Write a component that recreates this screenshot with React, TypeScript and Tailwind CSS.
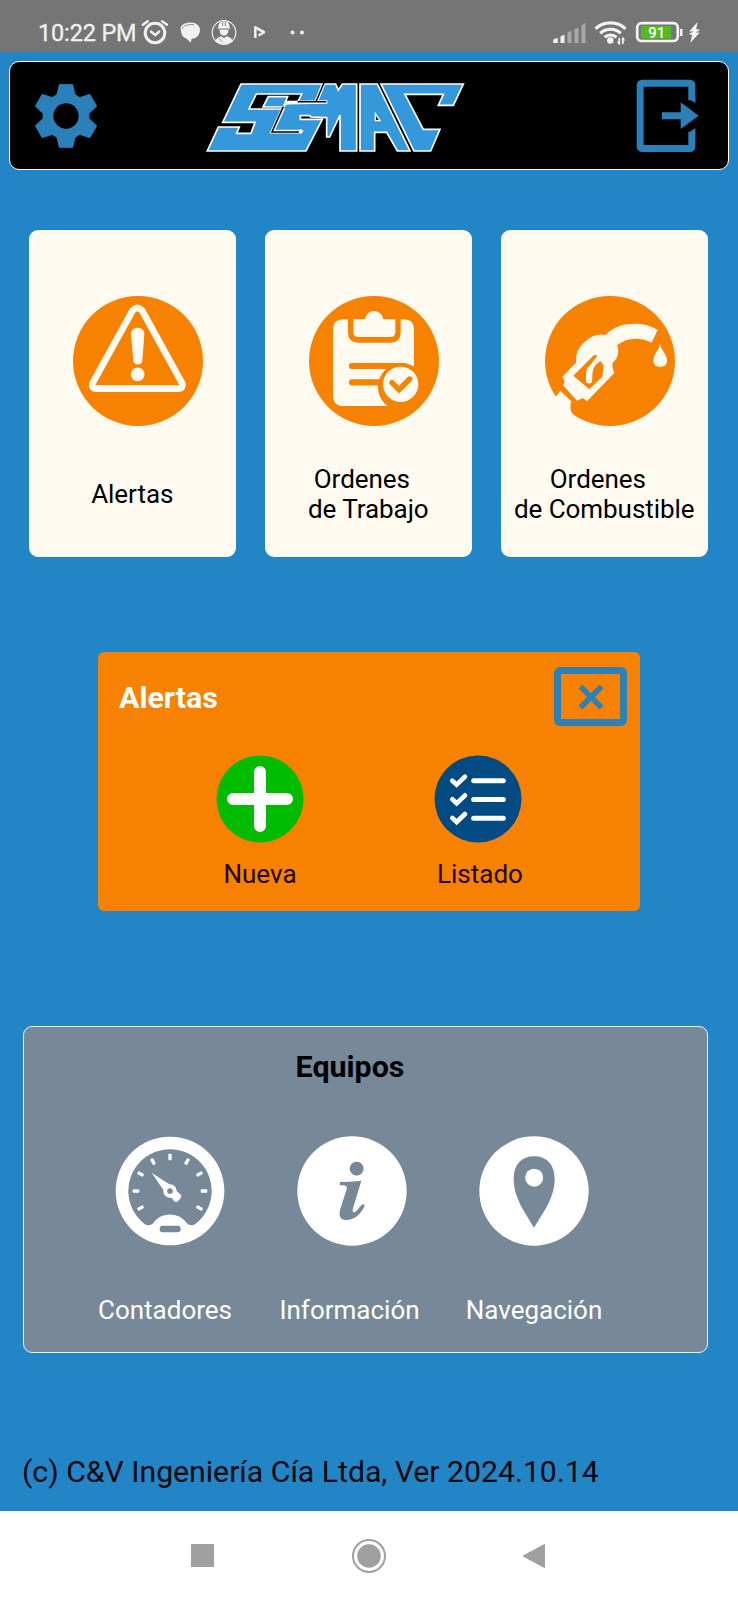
import type { ReactNode } from "react";

function StatusIcons() {
  return (
    <svg className="h-[52px] w-[168px]" viewBox="138 0 168 52" fill="none">
      <g stroke="#f1f1f1" strokeWidth="3" strokeLinecap="round" strokeLinejoin="round">
        <circle cx="155" cy="33" r="9.800" />
        <path d="M151 31.500l4.200 3.600 4-3.600" strokeWidth="2.400" />
        <path d="M142.800 24.800l5-3.600M167 24.800l-5-3.600" strokeWidth="2.400" />
      </g>
      <path d="M181 31c-2-5 3-8.500 9-8.500 4 0 6 .8 7 2 3 1.500 3.500 5 2.500 8.500-1 3.500-4 5.500-8 6l-.6 3.800-4.600-4.300c-3-1-5-3.500-5.300-7.500z" fill="#f1f1f1" />
      <path d="M182 29c1.500-3.500 6-5 12-4.200" stroke="#858585" strokeWidth=".9" />
      <circle cx="224" cy="32.500" r="11.800" stroke="#f1f1f1" strokeWidth="1.200" />
      <path d="M218.300 27.500c0-4.500 2.500-6.500 5.700-6.500s5.700 2 5.700 6.500l1.300 1h-14z" fill="#f1f1f1" />
      <path d="M219.500 29.500h9c0 4-2 6-4.500 6s-4.500-2-4.500-6zM215 41.500c1-3 3.500-4.500 6-5.200l3 1.700 3-1.700c2.500.7 5 2.200 6 5.200-5 3.300-13 3.300-18 0z" fill="#f1f1f1" />
      <path d="M222.700 21v5M225.300 21v5M219 31l-1.500-1M219.500 38.500l2.500 3" stroke="#757575" strokeWidth=".8" />
      <path d="M255.300 38V27.300L264 32.200L258.500 35.500" stroke="#f1f1f1" strokeWidth="2.500" strokeLinejoin="round" />
      <circle cx="292.500" cy="32.500" r="2" fill="#f1f1f1" />
      <circle cx="302" cy="32.500" r="2" fill="#f1f1f1" />
    </svg>
  );
}

function SystemIcons() {
  return (
    <svg className="h-[52px] w-[149px]" viewBox="552 0 149 52" fill="none">
      <path d="M553.300 39.500l4.500-1.700v5.200h-4.500zM560.500 36.500l4-2v8.500h-4z" fill="#f4f4f4" />
      <path d="M567.500 32.500l4-2v12.500h-4zM574.500 29.500l4-2v15.500h-4zM581.500 25.500l4-3v20.500h-4z" fill="#a9a9a9" />
      <g stroke="#f4f4f4" strokeWidth="3.200">
        <path d="M595.500 28.700c8.500-7.800 21.500-7.800 30 0" />
        <path d="M600.200 33.200c6-5.300 14.600-5.300 20.600 0" />
        <path d="M604.600 37.300c3.500-3 8.300-3 11.800 0" />
      </g>
      <circle cx="610.300" cy="40.500" r="3.200" fill="#f4f4f4" />
      <path d="M619.300 38v6.500M622.800 37.500v6.500" stroke="#f4f4f4" strokeWidth="1.700" />
      <path d="M616.800 41.500l2.500 3.500v-3.500zM625.300 40.500l-2.500-3.500v3.500z" fill="#f4f4f4" />
      <rect x="637.200" y="23.200" width="40.600" height="17.800" rx="4.500" stroke="#f4f4f4" strokeWidth="2.700" />
      <rect x="641" y="26" width="30" height="12.500" fill="#4fbd1b" />
      <text x="656.800" y="38" textAnchor="middle" fontFamily="Roboto, sans-serif" fontSize="15" fontWeight="500" fill="#fff">91</text>
      <path d="M681.200 29v7" stroke="#f4f4f4" strokeWidth="2.500" />
      <path d="M697.500 22l-8.300 9.500h4.500l-5 2.500 3.500 1-2 8 9.500-10.500h-4l4.500-2.500-4-1z" fill="#f4f4f4" />
    </svg>
  );
}

function Gear() {
  const tooth = "M-28-60L-20-94H20L28-60Z";
  return (
    <svg className="h-[66px] w-[66px]" viewBox="-99 -99 198 198">
      <g fill="#2b80b9" stroke="#2b80b9" strokeWidth="3" strokeLinejoin="round">
        <circle r="69" />
        {[0, 60, 120, 180, 240, 300].map((angle) => (
          <path key={angle} d={tooth} transform={`rotate(${angle})`} />
        ))}
      </g>
      <circle r="38" fill="#000" />
    </svg>
  );
}

function Logo() {
  return (
    <svg className="h-[90px] w-[290px]" viewBox="0 0 870 270">
      <g fill="#3498db" stroke="#fff" strokeWidth="5">
        <path d="M153 39H437L445 57L457 39H500V240H450V132L419 198H410V140L362 138L360 134H331V145H397L348 240H52L85 168H148L140 187H183L195 154H98Z" />
        <path d="M199 69H335L323 93L290 97L277 114H177Z" fill="#000" />
        <path d="M235 77H293L280 108H219Z" />
        <path d="M510 39H562L660 240H622L590 184H554V240H510Z" />
        <path d="M556 128L570 149H556Z" fill="#000" strokeWidth="4" />
        <path d="M573 39H820L790 103H745L760 70H645L700 175H750L722 240H672Z" />
      </g>
      <g fill="none">
        <path d="M400 39L379 92M288 95L412 93M280 111L247 182H332L336 176" stroke="#fff" strokeWidth="11" />
        <path d="M402 35L378 92M323 92L409 92M280 107L246 183H327" stroke="#000" strokeWidth="4.500" />
      </g>
    </svg>
  );
}

function ExitIcon() {
  return (
    <svg className="h-[74px] w-[64px]" viewBox="802 236 192 222">
      <path d="M969.500 300V256Q969.500 248.500 962 248.500H822Q814.500 248.500 814.500 256V437Q814.500 444.500 822 444.500H962Q969.500 444.500 969.500 437V394" fill="none" stroke="#2b80b9" strokeWidth="21" />
      <path d="M959 294L980 309V290ZM959 398L980 383V400Z" fill="#2b80b9" />
      <path d="M880 336H936V306L990 346L936 386V357H880Z" fill="#2b80b9" />
    </svg>
  );
}

function AlertIcon() {
  return (
    <svg className="h-[132px] w-[132px]" viewBox="156 226 396 396">
      <circle cx="354" cy="424" r="195" fill="#f78101" />
      <path d="M338 272Q352 258 366 272L487 492Q490 505 477 507H227Q214 505 217 492Z" fill="none" stroke="#fffaf0" strokeWidth="20" strokeLinejoin="round" />
      <path d="M333 343C333 318 373 318 373 343L367 424C366 438 341 438 340 424Z" fill="#fffaf0" />
      <circle cx="353" cy="464" r="20.500" fill="#fffaf0" />
    </svg>
  );
}

function OrdersIcon() {
  return (
    <svg className="h-[132px] w-[132px]" viewBox="144 226 396 396">
      <circle cx="342" cy="424" r="195" fill="#f78101" />
      <path d="M251 299H431Q462 299 462 330V559H251Q219 559 219 528V330Q219 299 251 299Z" fill="#fffaf0" />
      <path d="M264 296H422V338Q422 369 391 369H295Q264 369 264 338Z" fill="#f78101" />
      <path d="M280 299H315C320 266 364 266 370 299H406V337Q406 352 391 352H295Q280 352 280 337Z" fill="#fffaf0" />
      <path d="M276 439H432M276 488H380" stroke="#f78101" strokeWidth="18.500" strokeLinecap="round" />
      <path d="M385 561A68 68 0 1 1 466 443V561Z" fill="#f78101" />
      <circle cx="422" cy="494" r="53" fill="#fffaf0" />
      <path d="M396 489L417 510L449 478" fill="none" stroke="#f78101" strokeWidth="16" strokeLinecap="round" />
    </svg>
  );
}

function FuelIcon() {
  return (
    <svg className="h-[132px] w-[132px]" viewBox="161 226 396 396">
      <circle cx="359" cy="424" r="195" fill="#f78101" />
      <g fill="#fffaf0">
        <path d="M346 346C370 318 405 311 440 312C466 313 486 321 502 331L484 369C450 352 410 353 380 377C388 397 383 418 367 429Q364 441 372 460L290 545L277 535L260 543L218 497L223 486L216 471L258 428C256 400 262 386 285 365C304 347 325 341 346 346Z" />
        <path d="M150 530H197L210 513L243 545Q234 577 254 588L200 630Z" />
        <path d="M509 373C505 394 489 402 489 423Q489 441 509 441Q530 441 530 423C530 402 513 394 509 373Z" />
      </g>
      <path d="M249 468L308 409Q316 405 319 409Q335 430 340 439L336 471L297 509Z" fill="#f78101" />
      <path d="M331 411C306 429 298 440 297 459L296 482" fill="none" stroke="#fffaf0" strokeWidth="19" strokeLinecap="round" />
      <path d="M293 439Q306 422 316 409" fill="none" stroke="#f78101" strokeWidth="7" strokeLinecap="round" />
    </svg>
  );
}

function PlusIcon() {
  return (
    <svg className="h-22 w-22" viewBox="-44 -44 88 88">
      <circle r="43.500" fill="#00bb00" />
      <path d="M-27 0H27M0-27V27" stroke="#fff" strokeWidth="12" strokeLinecap="round" />
    </svg>
  );
}

function ListIcon() {
  return (
    <svg className="h-22 w-22" viewBox="192 344 264 264">
      <circle cx="324" cy="476" r="130.500" fill="#024b82" />
      {[0, 56, 112].map((dy) => (
        <g key={dy} transform={`translate(0 ${dy})`} fill="none" stroke="#fff" strokeLinecap="round">
          <path d="M247 421L260 433L285 409" strokeWidth="14" />
          <path d="M311 421.500H400" strokeWidth="15" />
        </g>
      ))}
    </svg>
  );
}

function GaugeIcon() {
  return (
    <svg className="h-[110px] w-[110px]" viewBox="313 376 330 330">
      <circle cx="478" cy="541" r="163" fill="#fff" />
      <path d="M402 640A125 125 0 1 1 554 640Q540 649 527 636C506 603 450 603 429 636Q416 649 402 640Z" fill="#778899" />
      <rect x="447" y="645" width="63" height="20" rx="9" fill="#778899" />
      {[-120, -90, -60, -30, 0, 30, 60, 90, 120].map((angle) => (
        <rect key={angle} x="473" y="429" width="10" height="20" rx="3" fill="#fff" transform={`rotate(${angle} 478 541)`} />
      ))}
      <path d="M423 486L483 525L498 541L512 554Q513 563 498 574Q488 573 487 566L474 556L462 543Z" fill="#fff" />
      <circle cx="478" cy="541" r="20" fill="#fff" />
      <circle cx="478" cy="541" r="8.500" fill="#778899" />
    </svg>
  );
}

function InfoIcon() {
  return (
    <svg className="h-[110px] w-[110px]" viewBox="860 376 330 330">
      <circle cx="1025" cy="541" r="164" fill="#fff" />
      <circle cx="1039" cy="474" r="21" fill="#778899" />
      <path d="M989 514Q1020 514 1053 510L1028 593C1024 608 1032 608 1041 598L1054 582Q1061 579 1063 586C1050 614 1030 628 1008 628C987 628 985 613 990 595L1009 535C1011 525 1004 524 988 524Z" fill="#778899" />
    </svg>
  );
}

function PinIcon() {
  return (
    <svg className="h-[110px] w-[110px]" viewBox="355 376 330 330">
      <circle cx="520" cy="541" r="164" fill="#fff" />
      <path d="M520 651C500 614 459 566 459 504C459 460 484 437 520 437S582 460 582 504C582 566 541 614 520 651Z" fill="#778899" />
      <circle cx="520.500" cy="501" r="27" fill="#fff" />
    </svg>
  );
}

function Card({ icon, children }: { icon: ReactNode; children: ReactNode }) {
  return (
    <button className="flex h-[327px] w-[206.5px] flex-col items-center rounded-[9px] bg-[#fffaf0] pt-[65px]">
      <div className="pl-[11px]">{icon}</div>
      <div className="mt-[32px] flex h-[70px] items-center justify-center text-center text-[26px] leading-[30px] tracking-[-0.05px] whitespace-pre text-black">
        {children}
      </div>
    </button>
  );
}

function Action({ icon, label }: { icon: ReactNode; label: ReactNode }) {
  return (
    <button className="flex w-[218px] flex-col items-center gap-[16px] text-[26px] leading-[30px]">
      {icon}
      {label}
    </button>
  );
}

export default function App() {
  return (
    <div className="flex h-[1600px] w-[738px] flex-col bg-[#2285c6] font-[Roboto,sans-serif]">
      <div className="flex h-[52px] shrink-0 items-center bg-[#757575] pr-[37px] pl-[38px] text-[#f1f1f1]">
        <span className="w-[100px] pt-[13px] text-[23.5px] leading-[28px] tracking-[-0.15px] whitespace-nowrap [-webkit-text-stroke:0.3px_#f1f1f1]">
          10:22 PM
        </span>
        <StatusIcons />
        <div className="ml-auto">
          <SystemIcons />
        </div>
      </div>

      <header className="mx-[9px] mt-[9px] flex h-[109px] shrink-0 items-center rounded-[10px] border border-white bg-black">
        <div className="ml-[23px]"><Gear /></div>
        <div className="ml-[91px]"><Logo /></div>
        <button className="ml-[156px]"><ExitIcon /></button>
      </header>

      <div className="mt-[60px] flex shrink-0 gap-[29.5px] pl-[29px]">
        <Card icon={<AlertIcon />}>Alertas</Card>
        <Card icon={<OrdersIcon />}>{"Ordenes\u00a0\u00a0\nde Trabajo"}</Card>
        <Card icon={<FuelIcon />}>{"Ordenes\u00a0\u00a0\nde Combustible"}</Card>
      </div>

      <section className="mt-[95px] ml-[98px] h-[259px] w-[542px] shrink-0 rounded-[6px] bg-[#f78101]">
        <div className="flex h-[103px] items-start justify-between pt-[15px] pr-[13px] pl-[21px]">
          <h2 className="pt-[13px] text-[30.4px] leading-[35px] font-bold text-white">Alertas</h2>
          <button className="flex h-[59px] w-[73px] items-center justify-center rounded-[6px] border-[7px] border-[#2f80b5]">
            <svg className="h-7 w-7" viewBox="-14 -14 28 28">
              <path d="M-10.500-10.500L10.500 10.500M10.500-10.500L-10.500 10.500" stroke="#2f80b5" strokeWidth="5.500" />
            </svg>
          </button>
        </div>
        <div className="flex pl-[53px] text-[#1d0505]">
          <Action icon={<PlusIcon />} label="Nueva" />
          <Action icon={<ListIcon />} label={<span className="ml-[4px]">Listado</span>} />
        </div>
      </section>

      <section className="mt-[115px] ml-[23px] h-[327px] w-[685px] shrink-0 rounded-[9px] border-[1.5px] border-[#e8f2fa] bg-[#778899]">
        <h2 className="mt-[22px] ml-[-31px] text-center text-[30.4px] leading-[35px] font-bold text-black">Equipos</h2>
        <div className="mt-[51.5px] flex pl-[54.5px] text-white">
          <button className="flex w-[182px] flex-col items-center gap-[47.5px] text-[26px] leading-[34px]">
            <GaugeIcon />
            <span className="-ml-[9px]">Contadores</span>
          </button>
          <button className="flex w-[182px] flex-col items-center gap-[47.5px] text-[26px] leading-[34px]">
            <InfoIcon />
            <span className="-ml-[4px]">Información</span>
          </button>
          <button className="flex w-[182px] flex-col items-center gap-[47.5px] text-[26px] leading-[34px]">
            <PinIcon />
            <span className="ml-[1px]">Navegación</span>
          </button>
        </div>
      </section>

      <footer className="mt-[101px] ml-[22px] shrink-0 text-[30.2px] leading-[36px] text-[#05080d]">
        (c) C&amp;V Ingeniería Cía Ltda, Ver 2024.10.14
      </footer>

      <nav className="mt-auto flex h-[89px] shrink-0 items-center bg-white pl-[191px]">
        <div className="h-[23px] w-[23px] bg-[#a0a0a0]" />
        <svg className="ml-[137px] h-9 w-9" viewBox="-18 -18 36 36">
          <circle r="16" fill="none" stroke="#a0a0a0" strokeWidth="2" />
          <circle r="11.800" fill="#a0a0a0" />
        </svg>
        <svg className="ml-[135px] h-[26px] w-[24px]" viewBox="0 0 24 26">
          <path d="M1 13L22.500 1.500V24.500Z" fill="#a0a0a0" stroke="#a0a0a0" strokeLinejoin="round" />
        </svg>
      </nav>
    </div>
  );
}
